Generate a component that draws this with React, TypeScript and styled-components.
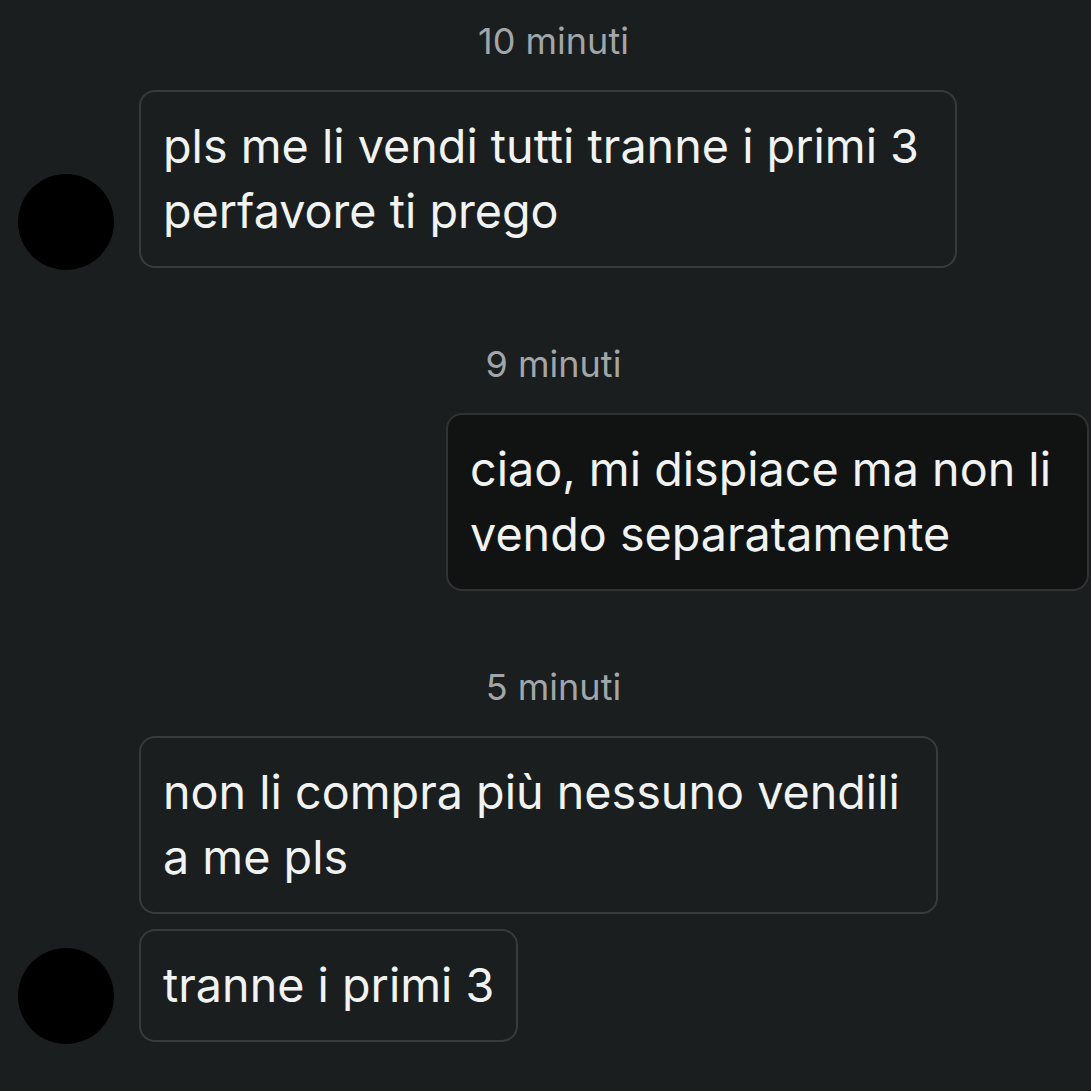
import React from "react";
import styled, { createGlobalStyle } from "styled-components";

const Global = createGlobalStyle`
  html, body {
    margin: 0;
    padding: 0;
    background: #1a1e1f;
  }
  body {
    font-family: Inter, "Noto Sans", "Liberation Sans", sans-serif;
    -webkit-font-smoothing: antialiased;
  }
`;

const Page = styled.div`
  width: 1091px;
  height: 1091px;
  box-sizing: border-box;
  background: #1a1e1f;
  padding: 21px 2px 0 18px;
  display: flex;
  flex-direction: column;
  gap: 76px;
  overflow: hidden;
`;

const Group = styled.section`
  display: flex;
  flex-direction: column;
  gap: 29px;
`;

const Stamp = styled.div`
  text-align: center;
  font-size: 36px;
  line-height: 40px;
  color: #a2a6a8;
  font-weight: 400;
`;

const Row = styled.div<{ $mine?: boolean }>`
  display: flex;
  justify-content: ${(p) => (p.$mine ? "flex-end" : "flex-start")};
  align-items: flex-end;
  gap: 25px;
`;

const Avatar = styled.div`
  width: 96px;
  height: 96px;
  border-radius: 50%;
  background: #000;
  flex: none;
  margin-bottom: -2px;
`;

const Stack = styled.div`
  display: flex;
  flex-direction: column;
  align-items: flex-start;
  gap: 15px;
`;

const Bubble = styled.div<{ $mine?: boolean; $wrapped?: boolean }>`
  box-sizing: border-box;
  width: fit-content;
  border: 2px solid ${(p) => (p.$mine ? "#303334" : "#383b3d")};
  background: ${(p) => (p.$mine ? "#111313" : "#1a1e1f")};
  border-radius: 16px;
  padding: 22px ${(p) => (p.$wrapped ? 36 : 22)}px 22px 22px;
  color: #f1f2f2;
  font-size: 46.7px;
  line-height: 65px;
  white-space: nowrap;
`;

type Msg = { lines: string[] };

const Message = ({ lines, mine }: { lines: string[]; mine?: boolean }) => (
  <Bubble $mine={mine} $wrapped={lines.length > 1}>
    {lines.map((l, i) => (
      <React.Fragment key={i}>
        {i > 0 && <br />}
        {l}
      </React.Fragment>
    ))}
  </Bubble>
);

const Received = ({ msgs }: { msgs: Msg[] }) => (
  <Row>
    <Avatar />
    <Stack>
      {msgs.map((m, i) => (
        <Message key={i} lines={m.lines} />
      ))}
    </Stack>
  </Row>
);

export default function App() {
  return (
    <>
      <Global />
      <Page>
        <Group>
          <Stamp>10 minuti</Stamp>
          <Received
            msgs={[{ lines: ["pls me li vendi tutti tranne i primi 3", "perfavore ti prego"] }]}
          />
        </Group>
        <Group>
          <Stamp>9 minuti</Stamp>
          <Row $mine>
            <Message mine lines={["ciao, mi dispiace ma non li", "vendo separatamente"]} />
          </Row>
        </Group>
        <Group>
          <Stamp>5 minuti</Stamp>
          <Received
            msgs={[
              { lines: ["non li compra più nessuno vendili", "a me pls"] },
              { lines: ["tranne i primi 3"] },
            ]}
          />
        </Group>
      </Page>
    </>
  );
}
